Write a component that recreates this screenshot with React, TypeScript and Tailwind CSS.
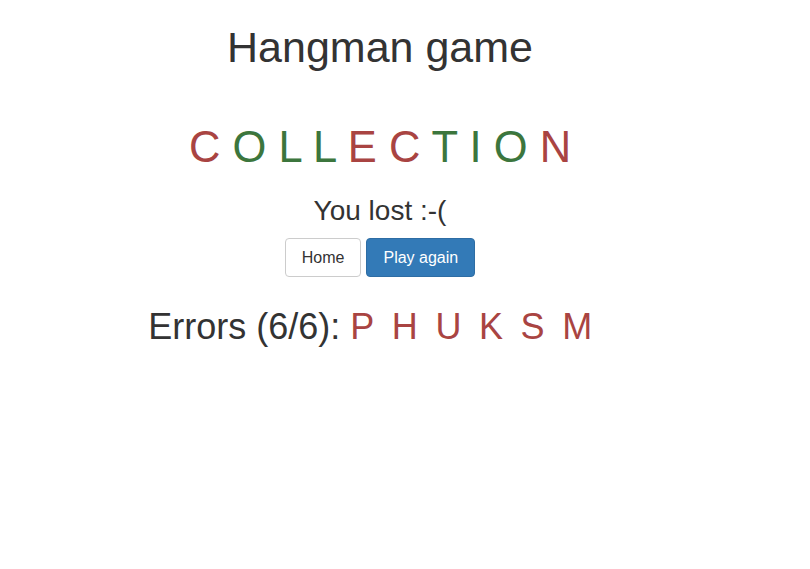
export default function App() {
  const word: { ch: string; ok: boolean }[] = [
    { ch: "C", ok: false },
    { ch: "O", ok: true },
    { ch: "L", ok: true },
    { ch: "L", ok: true },
    { ch: "E", ok: false },
    { ch: "C", ok: false },
    { ch: "T", ok: true },
    { ch: "I", ok: true },
    { ch: "O", ok: true },
    { ch: "N", ok: false },
  ];
  const errors = ["P", "H", "U", "K", "S", "M"];
  return (
    <div
      className="min-h-[569px] w-[810px] bg-white text-[#333333]"
      style={{ fontFamily: '"Liberation Sans", Arial, Helvetica, sans-serif' }}
    >
      <div className="w-[760px] flex flex-col items-center text-center">
        <h1 className="mt-[23px] text-[43px] leading-[48px] font-normal">Hangman game</h1>
        <div className="mt-[52px] text-[43.5px] leading-[48px] whitespace-pre">
          {word.map((w, i) => (
            <span key={i}>
              <span className={w.ok ? "text-[#3c763d]" : "text-[#a94442]"}>{w.ch}</span>
              {i < word.length - 1 ? " " : ""}
            </span>
          ))}
        </div>
        <div className="mt-[24px] text-[28px] leading-[32px]">You lost :-(</div>
        <div className="mt-[11px] flex gap-[5px]">
          <button className="h-[39px] px-[16px] text-[16px] border border-[#cccccc] bg-white text-[#333333] rounded-[4px]">
            Home
          </button>
          <button className="h-[39px] px-[16px] text-[16px] border border-[#2e6da4] bg-[#337ab7] text-white rounded-[4px]">
            Play again
          </button>
        </div>
        <div className="mt-[29.5px] pr-[2px] text-[36px] leading-[40px] whitespace-pre">
          <span>Errors (6/6): </span>
          {errors.map((e, i) => (
            <span key={i} className="text-[#a94442] mr-[17.6px]">
              {e}
            </span>
          ))}
        </div>
      </div>
    </div>
  );
}
